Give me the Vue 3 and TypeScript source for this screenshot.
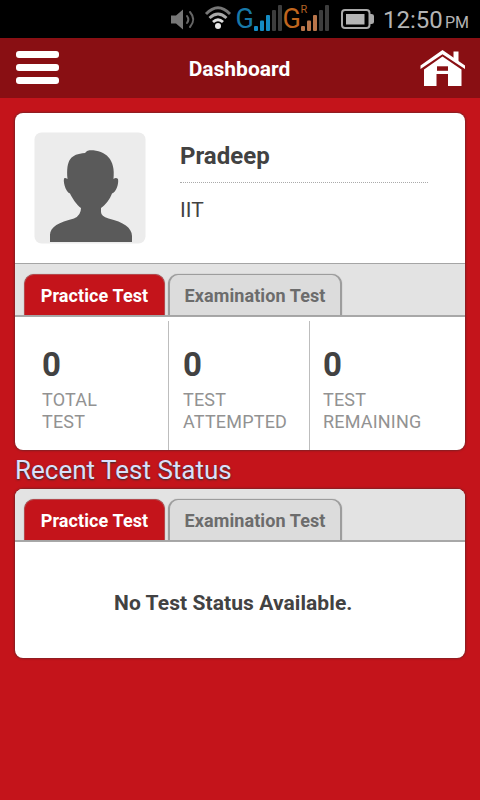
<script setup lang="ts">
import { ref } from 'vue'

interface Stat {
  value: number
  lines: string[]
}

const tabs: string[] = ['Practice Test', 'Examination Test']
const summaryTab = ref(0)
const recentTab = ref(0)
const stats: Stat[] = [
  { value: 0, lines: ['TOTAL', 'TEST'] },
  { value: 0, lines: ['TEST', 'ATTEMPTED'] },
  { value: 0, lines: ['TEST', 'REMAINING'] },
]
</script>

<template>
  <div class="screen">
    <div class="status-bar">
      <svg class="status-icons" width="210" height="38" viewBox="165 0 210 38">
        <g fill="#777">
          <path d="M171 15.500h5l7-6v20l-7-6h-5z" />
        </g>
        <g fill="none" stroke="#666" stroke-width="2" stroke-linecap="round">
          <path d="M187 16q2.600 3.500 0 7" />
          <path d="M190 12q6.500 7.500 0 15" />
        </g>
        <g fill="none" stroke-width="2.900">
          <path d="M206 14q12-12.500 24 0" stroke="#777" />
          <path d="M209.500 18q8.500-8 17 0" stroke="#aaa" />
          <path d="M213 22q5-4.500 10 0" stroke="#ddd" />
        </g>
        <circle cx="218" cy="26" r="3" fill="#e8e8e8" />
        <text x="235.500" y="27.500" class="net" fill="#1878a8">G</text>
        <g fill="#148cc4">
          <rect x="254" y="26" width="4" height="5" rx="1" />
          <rect x="260" y="20.500" width="4" height="10.500" rx="1" />
          <rect x="266" y="15" width="4" height="16" rx="1" />
        </g>
        <g fill="#3d3d3d">
          <rect x="272" y="10" width="4" height="21" rx="1" />
          <rect x="278" y="5" width="4" height="26" rx="1" />
        </g>
        <text x="282.500" y="27.500" class="net" fill="#c0661e">G</text>
        <text x="300.500" y="13" class="roam" fill="#b06024">R</text>
        <g fill="#b9754a">
          <rect x="301" y="26" width="4" height="5" rx="1" />
          <rect x="307" y="20.500" width="4" height="10.500" rx="1" />
          <rect x="313" y="15" width="4" height="16" rx="1" />
        </g>
        <g fill="#3d3d3d">
          <rect x="319" y="10" width="4" height="21" rx="1" />
          <rect x="325" y="5" width="4" height="26" rx="1" />
        </g>
        <rect x="342" y="10" width="27.500" height="18" rx="3" fill="none" stroke="#a9a9a9" stroke-width="2" />
        <path d="M370 14h1.500q2.500 0 2.500 2v6q0 2-2.500 2H370z" fill="#a9a9a9" />
        <rect x="346" y="14" width="18.500" height="10.500" fill="#b5b5b5" />
      </svg>
      <span class="clock">12:50</span>
      <span class="meridiem">PM</span>
    </div>

    <header class="app-bar">
      <button class="menu" aria-label="Menu"><i></i><i></i><i></i></button>
      <h1>Dashboard</h1>
      <svg class="home" width="46" height="38" viewBox="0 0 46 38">
        <path d="M33.500 2.500h5V14l-5-4z" fill="#fff" />
        <path d="M.5 16.500L22.500 1L45 16.500V20L22.500 5.300L.5 20z" fill="#fff" />
        <path d="M4 20.500L22.500 7.500L41.500 20.500V37H28V25H16.500V37H4z" fill="#fff" />
        <path d="M17 17.300h11v4.500H17z" fill="#890f13" />
      </svg>
    </header>

    <main>
      <section class="card summary">
        <div class="profile">
          <svg class="avatar" width="112" height="112" viewBox="0 0 112 112">
            <rect x=".5" y=".5" width="111" height="111" rx="7" fill="#ececec" />
            <path
              d="M16 110V103C16 95 25 90 40 86.500Q47 83.500 47 76C42.500 73 37.500 65 36 61.500C31 60 28.500 47 30.500 46Q31.500 45.500 33.500 47C32 28 36.500 22 51 21Q53 18 56 18.300C71 18 82 27 79.500 47Q82 45 84 47C85 52 82 60.500 78 61.500C76 67 71.500 73 67 76V80Q67 84 74.500 86.500C89.500 90 98 96 98 104V110z"
              fill="#5a5a5a"
            />
          </svg>
          <div class="person">
            <div class="name">Pradeep</div>
            <div class="org">IIT</div>
          </div>
        </div>
        <nav class="tabs">
          <button
            v-for="(tab, i) in tabs"
            :key="tab"
            class="tab"
            :class="{ active: summaryTab === i, wide: i === 1 }"
            @click="summaryTab = i"
          >{{ tab }}</button>
        </nav>
        <div class="stats">
          <div v-for="stat in stats" :key="stat.lines.join(' ')" class="stat">
            <div class="value">{{ stat.value }}</div>
            <div v-for="line in stat.lines" :key="line" class="label">{{ line }}</div>
          </div>
        </div>
      </section>

      <h2>Recent Test Status</h2>

      <section class="card recent">
        <nav class="tabs">
          <button
            v-for="(tab, i) in tabs"
            :key="tab"
            class="tab"
            :class="{ active: recentTab === i, wide: i === 1 }"
            @click="recentTab = i"
          >{{ tab }}</button>
        </nav>
        <p class="empty">No Test Status Available.</p>
      </section>
    </main>
  </div>
</template>

<style>
body {
  margin: 0;
  background: #c4141b;
}
</style>

<style scoped>
.screen {
  width: 480px;
  height: 800px;
  overflow: hidden;
  background: #c4141b;
  font-family: Roboto, "Liberation Sans", sans-serif;
  color: #424242;
}
.status-bar {
  display: flex;
  height: 38px;
  padding-left: 165px;
  background: #000;
  color: #b4b4b4;
  white-space: nowrap;
}
.status-icons {
  flex: none;
}
.net {
  font-size: 27px;
}
.roam {
  font-size: 11px;
}
.clock {
  width: 62px;
  padding-left: 8px;
  font-size: 24px;
  line-height: 40px;
}
.meridiem {
  font-size: 16px;
  line-height: 45px;
}
.app-bar {
  box-sizing: border-box;
  display: flex;
  justify-content: space-between;
  height: 60px;
  padding: 11px 14px 0 16px;
  background: #890f13;
}
button {
  border: 0;
  padding: 0;
  font-family: inherit;
}
.menu {
  display: flex;
  flex-direction: column;
  gap: 6px;
  width: 43px;
  padding-top: 2px;
  background: none;
}
.menu i {
  width: 43px;
  height: 7px;
  border-radius: 3px;
  background: #fff;
}
h1 {
  margin: 0;
  color: #fff;
  font-size: 21px;
  font-weight: 700;
  line-height: 40px;
}
main {
  padding: 15px 15px 0;
}
.card {
  overflow: hidden;
  border-radius: 8px;
  background: #fff;
  box-shadow: 0 0 2px 1px #802024;
}
.summary {
  height: 337px;
}
.profile {
  box-sizing: border-box;
  display: flex;
  gap: 34px;
  height: 150px;
  padding: 19px 0 0 19px;
}
.person {
  width: 248px;
}
.name {
  height: 50px;
  border-bottom: 1px dotted #aaa;
  font-size: 24px;
  font-weight: 700;
  line-height: 48px;
}
.org {
  font-size: 21px;
  line-height: 54px;
}
.tabs {
  box-sizing: border-box;
  display: flex;
  align-items: flex-end;
  gap: 3px;
  height: 54px;
  padding-left: 9px;
  border-top: 1px solid #a5a5a5;
  border-bottom: 2px solid #a8a8a8;
  background: #e3e3e3;
}
.tab {
  box-sizing: border-box;
  width: 141px;
  height: 41px;
  border: solid #9d9d9d;
  border-width: 1px 2px 0;
  border-radius: 10px 10px 0 0;
  background: #dcdcdc;
  box-shadow: 0 0 1px #888;
  color: #6c6c6c;
  font-size: 18px;
  font-weight: 700;
  letter-spacing: 0.09px;
  line-height: 40px;
  padding-top: 1px;
  white-space: nowrap;
}
.tab.wide {
  width: 174px;
}
.tab.active {
  border-color: #b5484c;
  border-width: 1px 1px 0;
  background: #c4141b;
  color: #fff;
}
.stats {
  display: grid;
  grid-template-columns: 154px 141px 1fr;
  height: 129px;
  padding-top: 4px;
}
.stat {
  box-sizing: border-box;
  padding: 25px 0 0 14px;
  border-right: 1px solid #bdbdbd;
}
.stat:first-child {
  padding-left: 27px;
}
.stat:last-child {
  padding-left: 13px;
  border-right: 0;
}
.value {
  margin-bottom: 6px;
  font-size: 33px;
  font-weight: 700;
  line-height: 37px;
}
.label {
  color: #929292;
  font-size: 18px;
  letter-spacing: 0.2px;
  line-height: 22px;
}
h2 {
  height: 39px;
  margin: 0;
  color: #dbe0fa;
  font-size: 26px;
  font-weight: 400;
  line-height: 40px;
  text-shadow: 0 1px 2px #303030;
}
.recent {
  height: 169px;
}
.recent .tabs {
  height: 53px;
  border-top-color: #e3e3e3;
}
.empty {
  margin: 0;
  padding-left: 99px;
  font-size: 21px;
  font-weight: 700;
  letter-spacing: 0.08px;
  line-height: 123px;
}
</style>
